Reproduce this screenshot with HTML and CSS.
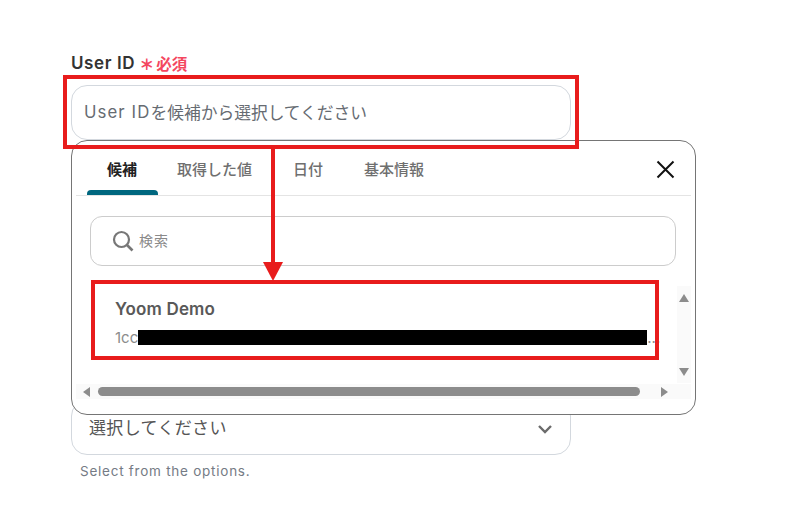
FILE: index.html
```html
<!DOCTYPE html>
<html lang="ja">
<head>
<meta charset="utf-8">
<title>User ID</title>
<link rel="stylesheet" href="styles.css">
</head>
<body>
<main class="form">
  <div class="label-row">
    <span class="label">User ID</span>
    <span class="required"><span class="asterisk">＊</span>必須</span>
  </div>
  <div class="field user-field"><span class="latin">User ID</span>を候補から選択してください</div>
  <div class="field select-field">
    <span>選択してください</span>
    <svg class="chevron" width="16" height="10" viewBox="0 0 16 10"><path d="M2 2l6 6 6-6" fill="none" stroke="#6b6b6b" stroke-width="2.4"/></svg>
  </div>
  <p class="help">Select from the options.</p>

  <section class="popup">
    <header class="tabs">
      <span class="tab active">候補</span>
      <span class="tab t2">取得した値</span>
      <span class="tab t3">日付</span>
      <span class="tab t4">基本情報</span>
      <svg class="close" width="19" height="19" viewBox="0 0 19 19"><path d="M1.5 1.5l16 16M17.5 1.5l-16 16" fill="none" stroke="#111" stroke-width="2"/></svg>
    </header>
    <div class="search">
      <svg width="22" height="22" viewBox="0 0 22 22"><circle cx="9.5" cy="9.5" r="7.5" fill="none" stroke="#777" stroke-width="2.2"/><path d="M15 15l5.500 5.500" stroke="#777" stroke-width="2.600" fill="none"/></svg>
      <span class="search-text">検索</span>
    </div>
    <div class="list">
      <div class="option">
        <div class="opt-name">Yoom Demo</div>
        <div class="opt-id"><span>1cc</span><span class="redact"></span><span class="dots">...</span></div>
      </div>
      <div class="v-track">
        <svg width="10" height="8" viewBox="0 0 10 8"><path d="M5 0l5 8H0z" fill="#8c8c8c"/></svg>
        <svg width="10" height="8" viewBox="0 0 10 8"><path d="M5 8L0 0h10z" fill="#8c8c8c"/></svg>
      </div>
    </div>
    <div class="h-track">
      <svg width="7" height="10" viewBox="0 0 7 10"><path d="M0 5l7-5v10z" fill="#8c8c8c"/></svg>
      <div class="thumb"></div>
      <svg width="7" height="10" viewBox="0 0 7 10"><path d="M7 5L0 0v10z" fill="#8c8c8c"/></svg>
    </div>
  </section>

  <div class="mark mark-input"></div>
  <div class="mark mark-option"></div>
  <div class="arrow-line"></div>
  <svg class="arrow-head" width="20" height="19" viewBox="0 0 20 19"><path d="M0 0h20L10 19z" fill="#e81c1c"/></svg>
</main>
</body>
</html>
```
FILE: styles.css
```css
* { box-sizing: border-box; }
html, body { margin: 0; height: 100%; background: #fff; overflow: hidden; }
body { font-family: Inter, "Noto Sans CJK JP", sans-serif; color: #333; }

.form { position: relative; width: 500px; margin-left: 71px; padding-top: 52px; }

.label-row { display: flex; align-items: center; height: 22px; margin-bottom: 11px; }
.label { font-size: 17px; font-weight: 600; color: #333; letter-spacing: .6px; }
.required { display: flex; align-items: center; margin-left: 4px; font-size: 15.500px; font-weight: 700; color: #f4475f; }
.asterisk { font-size: 15px; line-height: 15px; margin-top: 3px; margin-right: 2px; font-weight: 900; }

.field { height: 55px; border: 1px solid #d3d8de; border-radius: 16px; background: #fff; }
.user-field { display: flex; align-items: center; padding: 0 0 2px 12px; font-size: 16.750px; color: #666b72; }
.latin { letter-spacing: 1.100px; }
.select-field { display: flex; align-items: center; justify-content: space-between; margin-top: 260px; padding: 0 17px 0 17px; font-size: 17px; letter-spacing: .35px; color: #555; }
.select-field span { margin-bottom: 2px; }
.chevron { margin-top: 2px; }
.help { margin: 8px 0 0 9px; font-size: 13.500px; letter-spacing: .75px; color: #757b85; line-height: 16px; }

.popup { position: absolute; left: 0; top: 140px; width: 625px; height: 275px; padding: 0 4px; background: #fff; border: 1px solid #757575; border-radius: 16px; display: flex; flex-direction: column; }

.tabs { display: flex; align-items: center; height: 55px; flex: none; border-bottom: 1px solid #e4e4e4; position: relative; padding-left: 31px; font-size: 15px; font-weight: 500; color: #6f6f6f; }
.t2 { margin-left: 40px; }
.t3 { margin-left: 41px; }
.t4 { margin-left: 41px; }
.active { color: #222; font-weight: 700; }
.active::after { content: ""; position: absolute; left: 11px; bottom: 0; width: 71px; height: 5px; background: #00677f; border-radius: 4px 4px 0 0; }
.close { margin-left: auto; margin-right: 16px; margin-top: 2px; }

.search { display: flex; align-items: center; gap: 5px; height: 50px; margin: 20px 15px 0 14px; padding-left: 21px; border: 1px solid #cccccc; border-radius: 12px; font-size: 14px; letter-spacing: 1px; color: #8a8a8a; flex: none; }
.search-text { margin-bottom: 2px; }

.list { display: flex; justify-content: space-between; height: 98px; margin-top: 19px; flex: none; }
.option { width: 575px; margin-left: 16px; padding: 14px 0 0 23px; }
.opt-name { font-size: 17px; font-weight: 600; color: #595959; line-height: 20px; letter-spacing: .15px; }
.opt-id { display: flex; align-items: center; margin-top: 10px; font-size: 15px; color: #8c8c8c; height: 16px; }
.redact { width: 509px; height: 15px; background: #000; flex: none; }

.v-track { width: 14px; height: 97px; margin-top: 1px; padding: 8px 2px 7px; background: #fafafa; display: flex; flex-direction: column; justify-content: space-between; align-items: center; flex: none; }

.h-track { display: flex; align-items: center; height: 15px; margin-top: 1px; padding: 0 23px 0 7px; background: #fafafa; flex: none; }
.thumb { width: 542px; height: 9px; margin: 0 21px 0 8px; border-radius: 5px; background: #8c8c8c; flex: none; }

.mark { position: absolute; border: 4px solid #e81c1c; pointer-events: none; }
.mark-input { left: -8px; top: 75px; width: 516px; height: 74px; }
.mark-option { left: 20px; top: 280px; width: 568px; height: 80px; }
.arrow-line { position: absolute; left: 200px; top: 148px; width: 4px; height: 116px; background: #e81c1c; }
.arrow-head { position: absolute; left: 192px; top: 262px; }
```
